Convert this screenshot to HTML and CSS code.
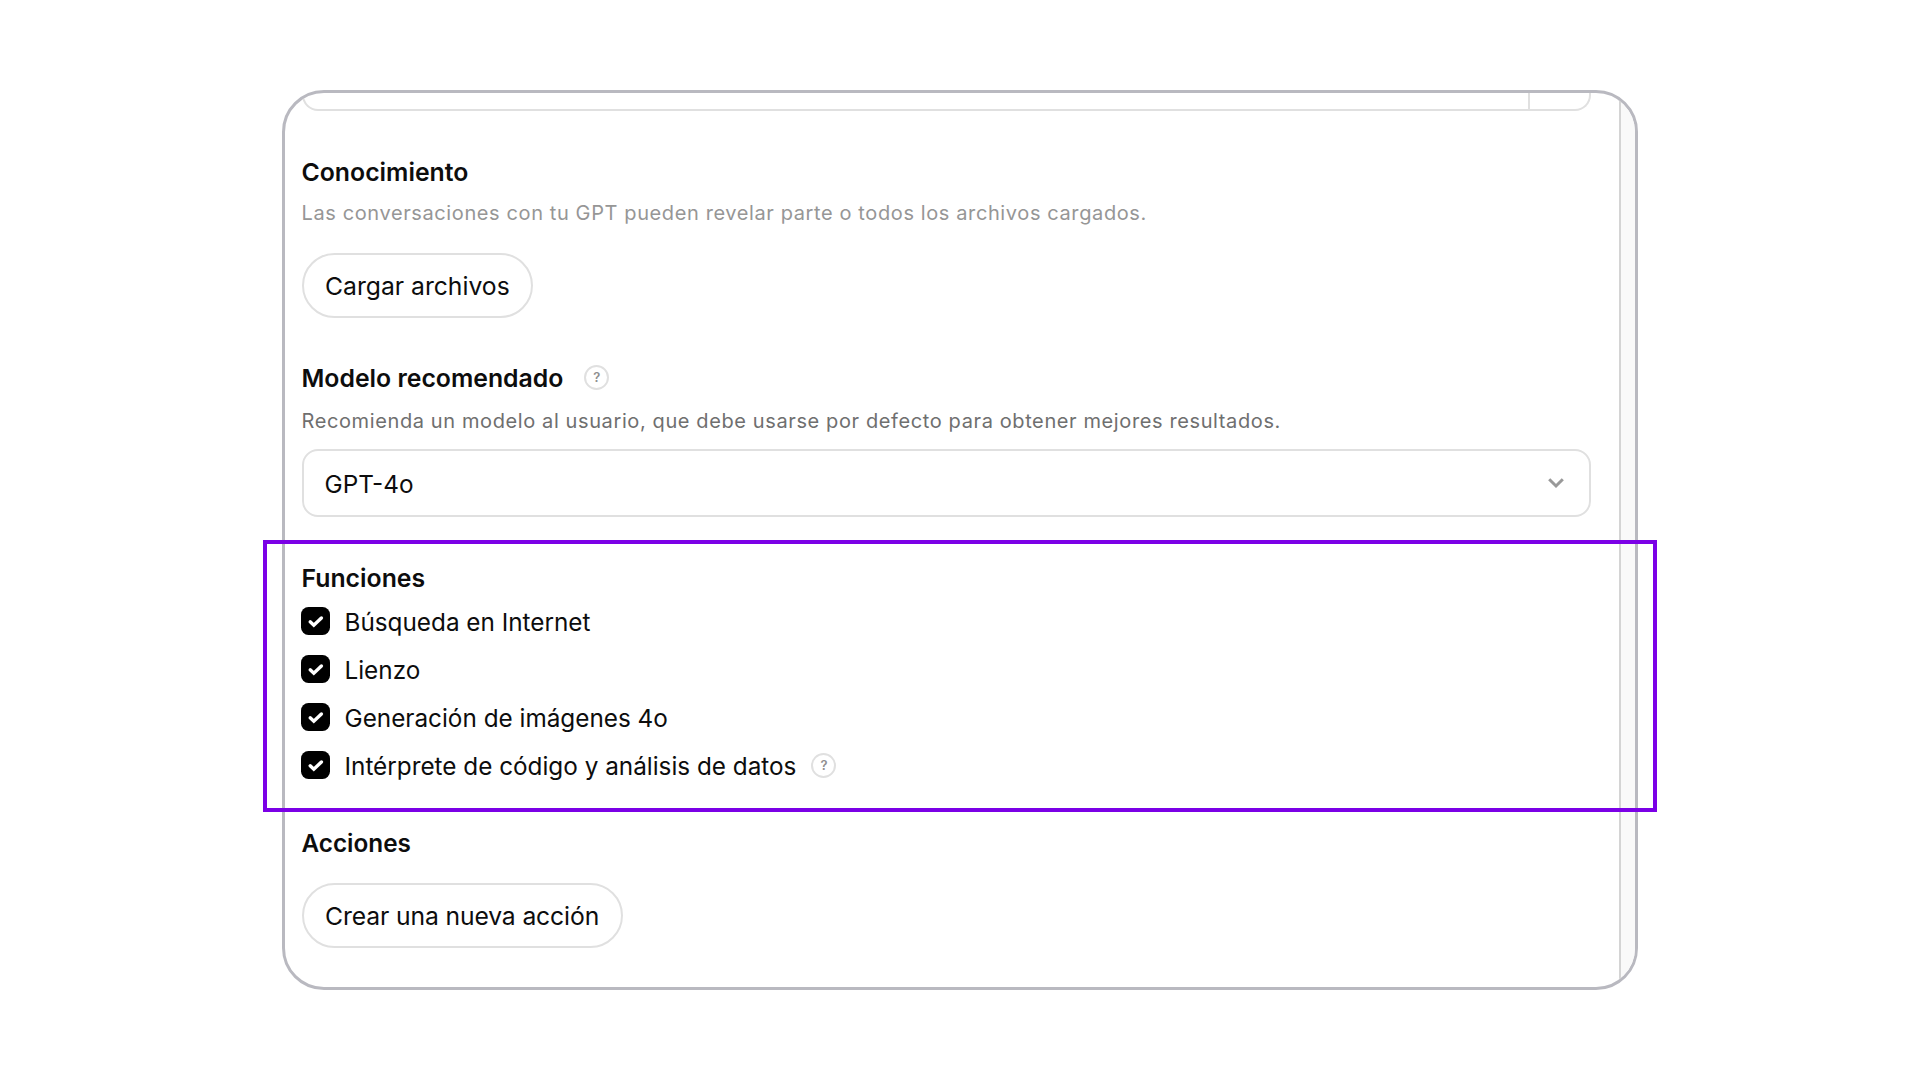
FILE: index.html
```html
<!DOCTYPE html>
<html lang="es">

<head>
  <meta charset="UTF-8">
  <title>Configurar GPT</title>
  <link rel="stylesheet" href="styles.css">
</head>

<body>
  <div class="page">
    <div class="frame">
      <div class="content">
        <div class="top-input">
          <span class="top-input-end"></span>
        </div>

        <section class="section-knowledge">
          <h3 class="title">Conocimiento</h3>
          <p class="desc desc-light">Las conversaciones con tu GPT pueden revelar parte o todos los archivos cargados.</p>
          <button class="pill pill-upload">Cargar archivos</button>
        </section>

        <section class="section-model">
          <div class="title-row">
            <h3 class="title">Modelo recomendado</h3>
            <span class="help help-title">?</span>
          </div>
          <p class="desc">Recomienda un modelo al usuario, que debe usarse por defecto para obtener mejores resultados.</p>
          <div class="select">
            <span class="select-value">GPT-4o</span>
            <svg class="chevron" width="18" height="12" viewBox="0 0 18 12">
              <path d="M2.2 2.2L9 9l6.8-6.8" fill="none" stroke="#999" stroke-width="3" />
            </svg>
          </div>
        </section>

        <section class="section-functions">
          <h3 class="title">Funciones</h3>
          <ul class="checks">
            <li class="check-row">
              <svg class="check" width="29" height="28" viewBox="0 0 29 28"><rect width="29" height="28" rx="7.5" /><path d="M9.2 14.8l3.6 3.4 7.6-7.2" /></svg>
              <span class="check-label">Búsqueda en Internet</span>
            </li>
            <li class="check-row">
              <svg class="check" width="29" height="28" viewBox="0 0 29 28"><rect width="29" height="28" rx="7.5" /><path d="M9.2 14.8l3.6 3.4 7.6-7.2" /></svg>
              <span class="check-label">Lienzo</span>
            </li>
            <li class="check-row">
              <svg class="check" width="29" height="28" viewBox="0 0 29 28"><rect width="29" height="28" rx="7.5" /><path d="M9.2 14.8l3.6 3.4 7.6-7.2" /></svg>
              <span class="check-label">Generación de imágenes 4o</span>
            </li>
            <li class="check-row">
              <svg class="check" width="29" height="28" viewBox="0 0 29 28"><rect width="29" height="28" rx="7.5" /><path d="M9.2 14.8l3.6 3.4 7.6-7.2" /></svg>
              <span class="check-label">Intérprete de código y análisis de datos</span>
              <span class="help">?</span>
            </li>
          </ul>
        </section>

        <section class="section-actions">
          <h3 class="title">Acciones</h3>
          <button class="pill pill-action">Crear una nueva acción</button>
        </section>
      </div>
      <div class="scrollbar"></div>
    </div>
    <div class="highlight"></div>
  </div>
</body>

</html>
```

FILE: styles.css
```css
* {
  box-sizing: border-box;
}

body {
  margin: 0;
  background-color: #fff;
  font-family: Inter, "Liberation Sans", sans-serif;
  color: #0d0d0d;
}

.page {
  position: relative;
  width: 1920px;
  height: 1080px;
  padding: 90px 0 0 281.5px;
}

.frame {
  display: flex;
  width: 1356.5px;
  height: 900px;
  border: 3px solid #b9b9c0;
  border-radius: 42px;
  overflow: hidden;
}

.content {
  flex: 1;
  padding: 0 28px 0 17px;
}

.scrollbar {
  width: 16px;
  background-color: #f9f9f9;
  border-left: 2px solid #d4d4d4;
}

.top-input {
  display: flex;
  justify-content: flex-end;
  height: 18px;
  border: 2px solid #e0e0e0;
  border-top: none;
  border-radius: 0 0 16px 16px;
}

.top-input-end {
  width: 61px;
  border-left: 2px solid #e0e0e0;
}

.title {
  margin: 0;
  font-size: 24.8px;
  line-height: 32px;
  font-weight: 600;
}

.title-row {
  display: flex;
  align-items: center;
}

.desc {
  margin: 0;
  font-size: 20px;
  line-height: 28px;
  letter-spacing: 0.61px;
  color: #6f6f6f;
}

.desc-light {
  color: #969696;
}

.pill {
  display: block;
  height: 65px;
  padding: 0 21.5px;
  border: 2px solid #e0e0e0;
  border-radius: 33px;
  background-color: #fff;
  font-family: inherit;
  font-size: 24.7px;
  color: #0d0d0d;
}

.help {
  display: flex;
  align-items: center;
  justify-content: center;
  width: 25px;
  height: 25px;
  margin-left: 15px;
  border: 2px solid #e0e0e0;
  border-radius: 50%;
  font-size: 13px;
  font-weight: 600;
  color: #8f8f8f;
}

.help-title {
  margin-left: 21px;
  margin-bottom: 2px;
}

.section-knowledge {
  margin-top: 45px;
}

.section-knowledge .desc {
  margin-top: 11px;
}

.pill-upload {
  margin-top: 26px;
}

.section-model {
  margin-top: 44px;
}

.section-model .desc {
  margin-top: 13px;
}

.select {
  display: flex;
  align-items: center;
  justify-content: space-between;
  height: 68px;
  margin-top: 14px;
  padding: 0 24px 0 21px;
  border: 2px solid #e0e0e0;
  border-radius: 16px;
  font-size: 24.3px;
}

.select-value {
  padding-top: 2px;
}

.section-functions {
  margin-top: 45px;
}

.checks {
  margin: 3px 0 0;
  padding: 0;
  list-style: none;
}

.check-row {
  display: flex;
  align-items: center;
  height: 48px;
  font-size: 24.3px;
}

.check {
  flex-shrink: 0;
  margin: 0 15px 0 -1px;
}

.check rect {
  fill: #000;
}

.check path {
  fill: none;
  stroke: #fff;
  stroke-width: 3.4;
  stroke-linecap: round;
}

.check-label {
  padding-top: 2px;
}

.section-actions {
  margin-top: 38px;
}

.section-actions .title {
  font-size: 24.3px;
}

.pill-action {
  margin-top: 24px;
  letter-spacing: -0.12px;
}

/* purple box drawn over the screenshot */
.highlight {
  position: absolute;
  left: 263px;
  top: 540px;
  width: 1394px;
  height: 272px;
  border: 4px solid #7b00e6;
}
```
